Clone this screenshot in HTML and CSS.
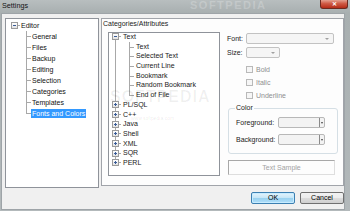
FILE: index.html
```html
<!DOCTYPE html>
<html>
<head>
<meta charset="utf-8">
<title>Settings</title>
<link rel="stylesheet" href="styles.css">
</head>
<body>
<div class="window">
  <div class="titlebar">
    <span class="title">Settings</span>
    <span class="wm-title">SOFTPEDIA</span>
    <span class="close">&#x2715;</span>
  </div>
  <div class="client">
    <div class="main">
      <div class="nav tree">
        <ul class="roots">
          <li class="only">
            <div class="row"><span class="exp minus"></span><span class="dash"></span><span class="lbl">Editor</span></div>
            <ul class="kids">
              <li><span class="lbl">General</span></li>
              <li><span class="lbl">Files</span></li>
              <li><span class="lbl">Backup</span></li>
              <li><span class="lbl">Editing</span></li>
              <li><span class="lbl">Selection</span></li>
              <li><span class="lbl">Categories</span></li>
              <li><span class="lbl">Templates</span></li>
              <li class="last"><span class="lbl sel">Fonts and Colors</span></li>
            </ul>
          </li>
        </ul>
      </div>
      <div class="panel">
        <div class="caption">Categories/Attributes</div>
        <div class="panel-body">
          <div class="cat tree">
            <ul class="roots">
              <li class="first">
                <div class="row"><span class="exp minus"></span><span class="dash"></span><span class="lbl">Text</span></div>
                <ul class="kids">
                  <li><span class="lbl">Text</span></li>
                  <li><span class="lbl">Selected Text</span></li>
                  <li><span class="lbl">Current Line</span></li>
                  <li><span class="lbl">Bookmark</span></li>
                  <li><span class="lbl">Random Bookmark</span></li>
                  <li class="last"><span class="lbl">End of File</span></li>
                </ul>
              </li>
              <li><div class="row"><span class="exp plus"></span><span class="dash"></span><span class="lbl">PL/SQL</span></div></li>
              <li><div class="row"><span class="exp plus"></span><span class="dash"></span><span class="lbl">C++</span></div></li>
              <li><div class="row"><span class="exp plus"></span><span class="dash"></span><span class="lbl">Java</span></div></li>
              <li><div class="row"><span class="exp plus"></span><span class="dash"></span><span class="lbl">Shell</span></div></li>
              <li><div class="row"><span class="exp plus"></span><span class="dash"></span><span class="lbl">XML</span></div></li>
              <li><div class="row"><span class="exp plus"></span><span class="dash"></span><span class="lbl">SQR</span></div></li>
              <li class="last"><div class="row"><span class="exp plus"></span><span class="dash"></span><span class="lbl">PERL</span></div></li>
            </ul>
            <div class="wm-mid">SOFTPEDIA</div>
            <div class="wm-url">www.softpedia.com</div>
          </div>
          <div class="props">
            <div class="frow">
              <span class="flabel">Font:</span>
              <span class="combo font-combo"><span class="arrow"></span></span>
            </div>
            <div class="frow size-row">
              <span class="flabel">Size:</span>
              <span class="combo size-combo"><span class="arrow"></span></span>
            </div>
            <div class="checks">
              <div class="check"><span class="box"></span><span>Bold</span></div>
              <div class="check"><span class="box"></span><span>Italic</span></div>
              <div class="check"><span class="box"></span><span>Underline</span></div>
            </div>
            <fieldset class="colors">
              <legend>Color</legend>
              <div class="crow">
                <span class="clabel">Foreground:</span>
                <span class="ccombo"><span class="cfield"></span><span class="cbtn"><span class="darrow"></span></span></span>
              </div>
              <div class="crow">
                <span class="clabel">Background:</span>
                <span class="ccombo"><span class="cfield"></span><span class="cbtn"><span class="darrow"></span></span></span>
              </div>
            </fieldset>
            <div class="sample">Text Sample</div>
          </div>
        </div>
      </div>
    </div>
    <div class="footer">
      <button class="btn default">OK</button>
      <button class="btn">Cancel</button>
    </div>
  </div>
</div>
</body>
</html>
```

FILE: styles.css
```css
* { box-sizing: border-box; }
html, body { margin: 0; padding: 0; }
body {
  width: 350px;
  height: 211px;
  overflow: hidden;
  background: linear-gradient(#b8bebf, #a8afb0 13px, #b3b9bb);
  font-family: "Liberation Sans", Arial, sans-serif;
  font-size: 7px;
  color: #000;
}
.window { position: relative; width: 350px; height: 211px; }

/* title bar */
.titlebar {
  height: 13px;
  display: flex;
  align-items: flex-start;
  position: relative;
}
.title {
  font-size: 7.2px;
  line-height: 12px;
  padding-left: 2px;
  color: #141414;
}
.wm-title {
  position: absolute;
  left: 190px;
  top: -1px;
  font-size: 11px;
  line-height: 12px;
  font-weight: bold;
  letter-spacing: 1.5px;
  color: rgba(255, 255, 255, 0.22);
}
.close {
  margin-left: auto;
  margin-right: 2px;
  width: 28px;
  height: 9px;
  border: 1px solid #6d2a20;
  border-top: none;
  border-radius: 0 0 3px 3px;
  background: linear-gradient(#e4a090, #cf5a45 45%, #b52c18);
  color: #fff;
  font-size: 6px;
  font-weight: bold;
  line-height: 8px;
  text-align: center;
}

/* client area */
.client {
  margin-left: 1px;
  width: 344px;
  height: 197px;
  background: #f0f0f0;
  border: 1px solid #9ea4a8;
}
.main {
  display: flex;
  height: 174px;
  padding: 4px 0 0 3px;
}

/* trees */
.tree { background: #fff; border: 1px solid #8f939a; position: relative; overflow: hidden; }
.tree ul { list-style: none; margin: 0; padding: 0; }
.tree li { position: relative; }
.row { display: flex; align-items: center; }
.exp {
  position: relative;
  z-index: 1;
  width: 7px;
  height: 7px;
  border: 1px solid #9b9b9b;
  background: linear-gradient(#ffffff, #e2e2e2);
  flex: none;
}
.exp::before {
  content: "";
  position: absolute;
  left: 1px;
  top: 2px;
  width: 3px;
  height: 1px;
  background: #3a5c97;
}
.exp.plus::after {
  content: "";
  position: absolute;
  left: 2px;
  top: 1px;
  width: 1px;
  height: 3px;
  background: #3a5c97;
}
.dash { width: 2px; height: 1px; background: #a8a8a8; margin-right: 1px; flex: none; }
.lbl { white-space: nowrap; }
.kids li::before {
  content: "";
  position: absolute;
  left: 0;
  top: 0;
  bottom: 0;
  border-left: 1px solid #a8a8a8;
}
.kids li::after {
  content: "";
  position: absolute;
  left: 0;
  width: 5px;
  border-top: 1px solid #a8a8a8;
}

/* left navigation tree */
.nav { width: 94px; height: 170px; padding-top: 1px; }
.nav .row { height: 11px; line-height: 11px; }
.nav .exp { margin-left: 5px; }
.nav .kids { padding-left: 20px; }
.nav .kids li { height: 11px; line-height: 11px; padding-left: 6px; }
.nav .kids li::after { top: 5px; }
.nav .kids li.last::before { bottom: auto; height: 6px; }
.nav .lbl { color: #111; }
.sel {
  display: inline-block;
  background: #3399ff;
  color: #fff !important;
  line-height: 9px;
  padding: 0 1px;
  margin-left: -1px;
  vertical-align: top;
  margin-top: 1px;
}

/* right panel */
.panel {
  margin-left: 2px;
  width: 243px;
  height: 168px;
  background: #fdfdfd;
  border: 1px solid #a1a4aa;
}
.caption { line-height: 10px; padding-left: 1px; color: #222; }
.panel-body { display: flex; padding-left: 6px; margin-top: 3px; }

.cat { width: 112px; height: 144px; }
.cat .roots { margin-top: -1px; }
.cat .row { height: 9.7px; line-height: 9.7px; }
.cat .exp { margin-left: 3px; }
.cat .dash { margin-right: 2px; }
.cat .roots > li::before {
  content: "";
  position: absolute;
  left: 6px;
  top: 0;
  bottom: 0;
  border-left: 1px solid #a8a8a8;
}
.cat .roots > li.first::before { top: 4.85px; }
.cat .roots > li.last::before { bottom: auto; height: 4.85px; }
.cat .kids { padding-left: 20px; }
.cat .kids li { height: 9.7px; line-height: 9.7px; padding-left: 7px; }
.cat .kids li::after { top: 4.85px; }
.cat .kids li.last::before { bottom: auto; height: 5px; }
.cat .lbl { color: #1a1a1a; }
.wm-mid {
  position: absolute;
  left: 1px;
  top: 55px;
  font-size: 16px;
  font-weight: bold;
  letter-spacing: 1px;
  color: rgba(0, 0, 0, 0.06);
  white-space: nowrap;
}
.wm-url {
  position: absolute;
  left: 22px;
  top: 82px;
  font-size: 5px;
  color: rgba(0, 0, 0, 0.1);
  white-space: nowrap;
}

/* properties column */
.props { margin-left: 7px; padding-top: 1px; width: 110px; }
.frow { display: flex; align-items: center; height: 11px; }
.size-row { margin-top: 3px; }
.flabel { width: 19px; color: #222; }
.combo {
  position: relative;
  height: 11px;
  border: 1px solid #c2c2c2;
  border-radius: 2px;
  background: #f5f5f5;
}
.font-combo { width: 88px; }
.size-combo { width: 34px; }
.arrow {
  position: absolute;
  right: 4px;
  top: 4px;
  border-left: 2px solid transparent;
  border-right: 2px solid transparent;
  border-top: 2px solid #a0a0a0;
}
.checks { margin-top: 5px; padding-left: 19px; }
.check { display: flex; align-items: center; height: 13px; color: #8e8f90; }
.box {
  width: 7px;
  height: 7px;
  border: 1px solid #b9b9b9;
  background: #f6f6f6;
  margin-right: 3px;
}
.colors {
  margin: 2px 0 0 1px;
  padding: 5px 0 8px 6px;
  width: 110px;
  border: 1px solid #d5dfe5;
  border-radius: 3px;
  min-inline-size: 0;
}
.colors legend {
  padding: 0 1px;
  line-height: 8px;
  font-size: 7px;
  color: #222;
}
.crow { display: flex; align-items: center; height: 11px; margin-left: 1px; }
.crow + .crow { margin-top: 6px; }
.clabel { width: 42px; color: #222; }
.ccombo {
  display: flex;
  width: 47px;
  height: 11px;
  border: 1px solid #b8b8b8;
  border-radius: 2px;
  background: #f3f3f3;
}
.cfield { flex: 1; }
.cbtn {
  width: 5px;
  border-left: 1px solid #8a8a8a;
  display: flex;
  align-items: center;
  justify-content: center;
}
.darrow {
  border-left: 1.5px solid transparent;
  border-right: 1.5px solid transparent;
  border-top: 2px solid #444;
}
.sample {
  margin: 6px 0 0 1px;
  width: 107px;
  height: 15px;
  border: 1px solid #dedede;
  border-top-color: #a8a8a8;
  border-left-color: #a8a8a8;
  background: #fdfdfd;
  color: #a3a3a3;
  text-align: center;
  line-height: 13px;
}

/* footer buttons */
.footer {
  display: flex;
  justify-content: flex-end;
  gap: 5px;
  padding-top: 4px;
}
.btn {
  width: 44px;
  height: 12px;
  padding: 0;
  font-family: "Liberation Sans", Arial, sans-serif;
  font-size: 7px;
  line-height: 10px;
  color: #000;
  border: 1px solid #707070;
  border-radius: 2px;
  background: linear-gradient(#f2f2f2, #ebebeb 50%, #dddddd 50%, #cfcfcf);
}
.btn.default {
  border-color: #3c7fb1;
  background: linear-gradient(#e5f4fc, #c4e5f6 50%, #98d1ef 50%, #b0defa);
  box-shadow: inset 0 0 0 1px #c7ecff;
}
```
